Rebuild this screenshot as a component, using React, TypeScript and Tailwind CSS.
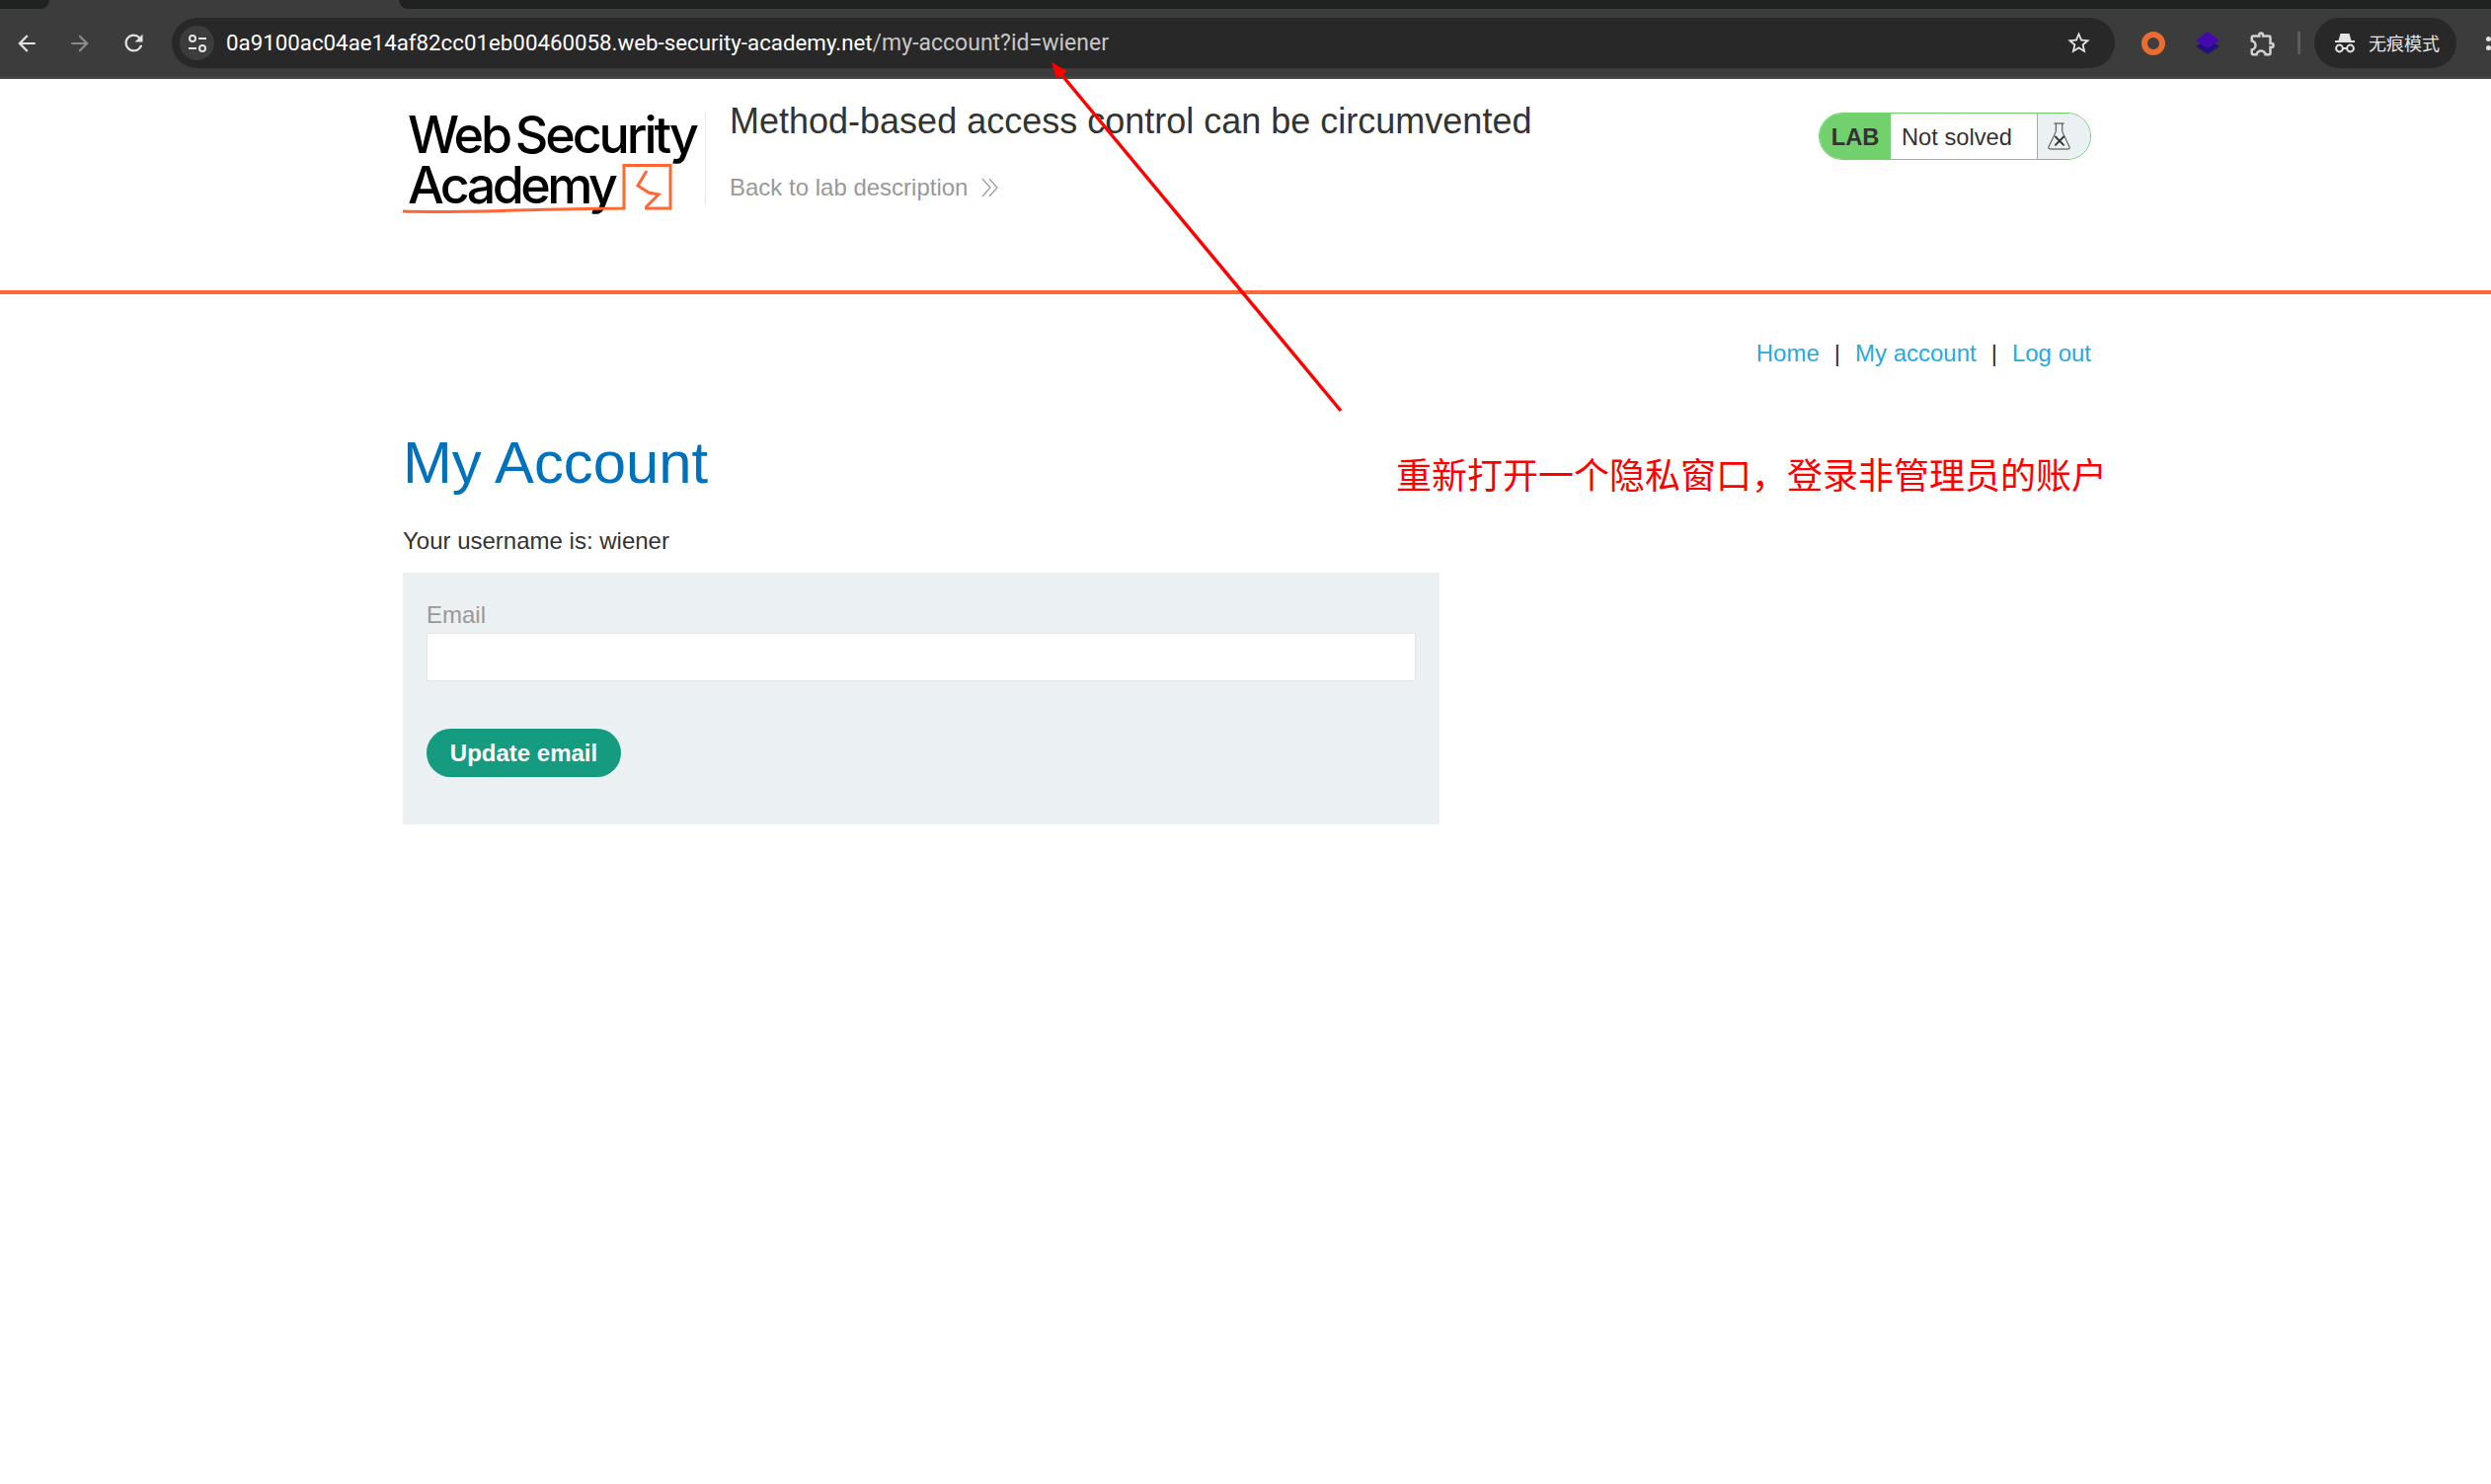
import {
  MdArrowBack,
  MdArrowForward,
  MdOutlineExtension,
  MdOutlineStarBorder,
  MdRefresh,
} from "react-icons/md";

function TuneIcon() {
  return (
    <svg width="22" height="22" viewBox="0 0 22 22" fill="none" stroke="#e3e3e3" strokeWidth="2">
      <circle cx="6" cy="6" r="3" />
      <path d="M12 6h8M2 16h8" />
      <circle cx="16" cy="16" r="3" />
    </svg>
  );
}

function IncognitoIcon() {
  return (
    <svg width="22" height="20" viewBox="0 0 22 20" fill="#e3e3e3">
      <path d="M6.5 0h9l2 7H21v2H1V7h3.5z" />
      <circle cx="5.5" cy="15" r="3.4" fill="none" stroke="#e3e3e3" strokeWidth="2" />
      <circle cx="16.5" cy="15" r="3.4" fill="none" stroke="#e3e3e3" strokeWidth="2" />
      <path d="M8.5 14h5v2h-5z" />
    </svg>
  );
}

function LayersIcon() {
  return (
    <svg width="26" height="26" viewBox="0 0 26 26">
      <path d="M13 8 25 16 13 24 1 16z" fill="#24107a" />
      <path d="M13 1 25 10 13 18 1 10z" fill="#4709ad" />
    </svg>
  );
}

function BrowserBar() {
  return (
    <div className="bg-[#3c3c3c]">
      <div className="flex h-[9px] justify-between bg-[#3c3c3c]">
        <div className="w-[50px] rounded-br-xl bg-[#202222]" />
        <div className="w-[2119px] rounded-bl-xl bg-[#202222]" />
      </div>
      <div className="flex h-[71px] items-start border-b-2 border-[#474747] pt-[9px]">
        <div className="flex h-[51px] w-[174px] items-center text-[#e3e3e3]">
          <MdArrowBack className="ml-[14px] size-[26px]" />
          <MdArrowForward className="ml-[28px] size-[26px] text-[#8a8a8a]" />
          <MdRefresh className="ml-[28px] size-[27px]" />
        </div>
        <div className="flex h-[51px] w-[1968px] items-center rounded-full bg-[#282828] pl-[8px] pr-[23px]">
          <div className="flex size-[35px] items-center justify-center rounded-full bg-[#3c3c3c]">
            <TuneIcon />
          </div>
          <div className="ml-[12px] pt-[2px] font-['Roboto',sans-serif] text-[#e3e3e3]">
            <span className="text-[22.3px] text-white">0a9100ac04ae14af82cc01eb00460058.web-security-academy.net</span>
            <span className="text-[23px] text-[#c7c7c7]">/my-account?id=wiener</span>
          </div>
          <MdOutlineStarBorder className="ml-auto size-[27px] text-[#e3e3e3]" />
        </div>
        <div className="flex h-[51px] items-center">
          <div className="ml-[27px] size-[24px] rounded-full border-[6px] border-[#e96c30]" />
          <div className="ml-[30px]">
            <LayersIcon />
          </div>
          <MdOutlineExtension className="ml-[28px] size-[30px] text-[#d0d0d0]" />
          <div className="ml-[20px] h-[23px] w-[3px] bg-[#5c5c5c]" />
          <div className="ml-[14px] flex h-[51px] w-[144px] items-center rounded-full bg-[#282828] pl-[20px]">
            <IncognitoIcon />
            <span className="ml-[13px] whitespace-nowrap font-['Noto_Sans_CJK_SC',sans-serif] text-[18px] text-[#e3e3e3]">无痕模式</span>
          </div>
          <div className="ml-[30px] flex flex-col gap-[4px]">
            <div className="size-[5px] rounded-full bg-[#e3e3e3]" />
            <div className="size-[5px] rounded-full bg-[#e3e3e3]" />
          </div>
        </div>
      </div>
    </div>
  );
}

function Logo() {
  return (
    <div className="relative h-[110px] w-[306px] shrink-0 pl-[5px] pt-px font-['Inter',sans-serif] text-[52px] font-medium leading-[51px] text-black">
      <div className="whitespace-nowrap tracking-[-3.1px] [word-spacing:-5px]">Web Security</div>
      <div className="whitespace-nowrap tracking-[-3.6px]">Academy</div>
      <svg className="absolute left-0 top-0" width="306" height="110" viewBox="0 0 306 110" fill="none" stroke="#ff6633">
        <path d="M0 104 C 62 106 152 101 224 101 V57.5 H271 V101 H245" strokeWidth="3" />
        <path d="M247 63 L238 78 L249 85 L259 87 L246 100" strokeWidth="3" />
      </svg>
    </div>
  );
}

function FlaskIcon() {
  return (
    <svg width="26" height="32" viewBox="0 0 28 32" fill="none" stroke="#333332" strokeWidth="1">
      <path d="M8 2h11M10 2v9L2 28q-.5 2 1.5 2h20q2 0 1.5-2L17 11V2" />
      <path d="M9 16 19 26M19 16 9 26" strokeWidth="2" />
    </svg>
  );
}

function LabBadge() {
  return (
    <div className="ml-auto mt-[13px] flex h-[48px] w-[276px] overflow-hidden rounded-full border border-[#70d16d] text-[23.7px] leading-[48px]">
      <div className="flex w-[72px] items-center justify-center bg-[#70d16d] pt-px font-bold text-[#333332]">LAB</div>
      <div className="flex w-[148px] items-center bg-white pl-[11px] pt-px text-[#333332]">Not solved</div>
      <div className="flex flex-1 items-center justify-center border-l border-[#70d16d] bg-[#ebf0f2] pr-[10px]">
        <FlaskIcon />
      </div>
    </div>
  );
}

function Annotation() {
  return (
    <>
      <svg className="pointer-events-none absolute left-0 top-0" width="2523" height="1503">
        <path d="M1358 416 1073 73" stroke="#ff0000" strokeWidth="3.5" />
        <path d="M1065 63 1081 72 1070 80z" fill="#ff0000" />
      </svg>
      <div className="absolute left-[1414px] top-[453px] font-['Noto_Sans_CJK_SC',sans-serif] text-[36px] leading-[52px] text-[#ff0000]">
        重新打开一个隐私窗口，登录非管理员的账户
      </div>
    </>
  );
}

export default function App() {
  return (
    <div className="relative min-h-[1503px] overflow-hidden bg-white font-['Liberation_Sans',Arial,sans-serif] text-[#333332]">
      <BrowserBar />
      <header className="h-[218px] border-b-[4px] border-[#ff6633] pt-[21px]">
        <div className="ml-[408px] flex w-[1710px] items-start">
          <div className="mt-[9px]">
            <Logo />
          </div>
          <div className="mt-[13px] h-[93px] w-px bg-[#e6e6e6]" />
          <div className="ml-[24px]">
            <h2 className="text-[36px] leading-[44px]">Method-based access control can be circumvented</h2>
            <div className="mt-[29px] flex items-center text-[24px] leading-[32px] text-[#999999]">
              Back to lab description
              <svg className="ml-[14px]" width="18" height="20" viewBox="0 0 18 20" fill="none" stroke="#999999" strokeWidth="1.2">
                <path d="M1 1l8 9-8 9M8 1l8 9-8 9" />
              </svg>
            </div>
          </div>
          <LabBadge />
        </div>
      </header>
      <main className="ml-[408px] w-[1710px] pt-[44px] text-[24px] leading-[32px]">
        <nav className="flex justify-end gap-[15px] text-[#29a9e0]">
          <a>Home</a>
          <span className="text-[#333332]">|</span>
          <a>My account</a>
          <span className="text-[#333332]">|</span>
          <a>Log out</a>
        </nav>
        <h1 className="mt-[60px] text-[59.8px] leading-[70px] text-[#0071bc]">My Account</h1>
        <p className="mt-[28px]">Your username is: wiener</p>
        <form className="mt-[16px] w-[1050px] bg-[#ebf0f2] px-[24px] pb-[48px] pt-[29px]">
          <label className="block leading-[28px] text-[#999999]">Email</label>
          <input className="mt-[4px] block h-[49px] w-full border border-[#e2e6e9] bg-white" />
          <button
            type="button"
            className="mt-[48px] block h-[49px] w-[197px] rounded-[25px] bg-[#159b80] text-center font-bold text-white"
          >
            Update email
          </button>
        </form>
      </main>
      <Annotation />
    </div>
  );
}
